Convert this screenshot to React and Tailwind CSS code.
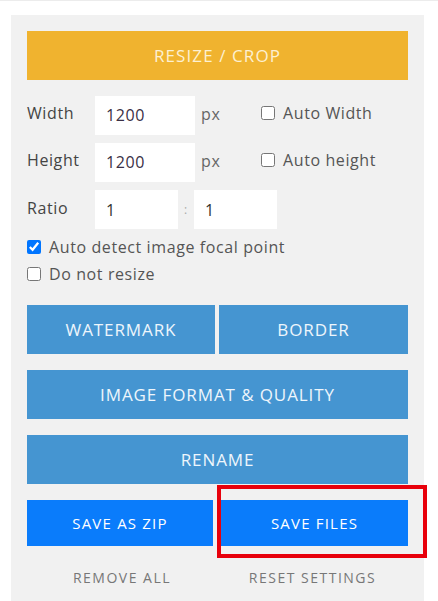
export default function App() {
  const font = { fontFamily: '"Open Sans", "Liberation Sans", sans-serif' };
  return (
    <div className="w-[438px] h-[601px] bg-white border-t border-[#ececec] overflow-hidden" style={font}>
      <div className="ml-[11px] mt-[14px] w-[413px] h-[587px] bg-[#f1f1f1] px-[16px] pt-[16px] flex flex-col">
        <button className="h-[49px] w-full bg-[#f0b32f] text-[#fdf0d2] text-[17px] tracking-[1.1px]">
          RESIZE / CROP
        </button>

        <div className="mt-[16px] flex items-center h-[39px] tracking-[0.6px]">
          <span className="w-[68px] pb-[5px] text-[16px] text-[#444]">Width</span>
          <div className="w-[100px] h-[39px] bg-white flex items-center pl-[11px] pb-[2px] text-[16px] text-[#3a2f45]">1200</div>
          <span className="ml-[6px] w-[60px] pb-[3px] text-[16px] text-[#666]">px</span>
          <label className="flex items-center gap-[8px] pb-[5px] text-[16px] text-[#555]">
            <input type="checkbox" className="w-[14px] h-[14px] m-0" />
            Auto Width
          </label>
        </div>

        <div className="mt-[8px] flex items-center h-[39px] tracking-[0.6px]">
          <span className="w-[68px] pb-[5px] text-[16px] text-[#444]">Height</span>
          <div className="w-[100px] h-[39px] bg-white flex items-center pl-[11px] pb-[2px] text-[16px] text-[#3a2f45]">1200</div>
          <span className="ml-[6px] w-[60px] pb-[3px] text-[16px] text-[#666]">px</span>
          <label className="flex items-center gap-[8px] pb-[5px] text-[16px] text-[#555]">
            <input type="checkbox" className="w-[14px] h-[14px] m-0" />
            Auto height
          </label>
        </div>

        <div className="mt-[8px] flex items-center h-[39px] tracking-[0.6px]">
          <span className="w-[68px] pb-[3px] text-[16px] text-[#444]">Ratio</span>
          <div className="w-[83px] h-[39px] bg-white flex items-center pl-[11px] text-[16px] text-[#333]">1</div>
          <span className="w-[16px] text-center text-[12px] text-[#aaa]">:</span>
          <div className="w-[83px] h-[39px] bg-white flex items-center pl-[11px] text-[16px] text-[#333]">1</div>
        </div>

        <label className="mt-[8px] flex items-center gap-[8px] h-[19px] text-[16px] text-[#555] tracking-[0.6px]">
          <input type="checkbox" defaultChecked className="w-[14px] h-[14px] m-0 accent-[#0075ff]" />
          Auto detect image focal point
        </label>
        <label className="mt-[8px] flex items-center gap-[8px] h-[19px] text-[16px] text-[#555] tracking-[0.6px]">
          <input type="checkbox" className="w-[14px] h-[14px] m-0" />
          Do not resize
        </label>

        <div className="mt-[22px] flex gap-[4px]">
          <button className="w-[188px] h-[49px] bg-[#4595d1] text-[#eef6fc] text-[17px] tracking-[0.9px]">WATERMARK</button>
          <button className="flex-1 h-[49px] bg-[#4595d1] text-[#eef6fc] text-[17px] tracking-[0.9px]">BORDER</button>
        </div>
        <button className="mt-[16px] w-full h-[49px] bg-[#4595d1] text-[#eef6fc] text-[17px] tracking-[0.9px]">IMAGE FORMAT &amp; QUALITY</button>
        <button className="mt-[16px] w-full h-[49px] bg-[#4595d1] text-[#eef6fc] text-[17px] tracking-[0.9px]">RENAME</button>

        <div className="relative mt-[16px] flex gap-[8px]">
          <button className="w-[186px] h-[46px] bg-[#0a7cfb] text-white text-[15px] tracking-[1.2px]">SAVE AS ZIP</button>
          <button className="flex-1 h-[46px] bg-[#0a7cfb] text-white text-[15px] tracking-[1.2px]">SAVE FILES</button>
          <div className="absolute left-[190px] top-[-15px] w-[210px] h-[73px] border-[4px] border-[#e8000b] pointer-events-none" />
        </div>

        <div className="mt-[21px] flex">
          <span className="w-[190px] text-center text-[14px] tracking-[1.5px] text-[#777]">REMOVE ALL</span>
          <span className="flex-1 text-center text-[14px] tracking-[1.5px] text-[#777]">RESET SETTINGS</span>
        </div>
      </div>
    </div>
  );
}
